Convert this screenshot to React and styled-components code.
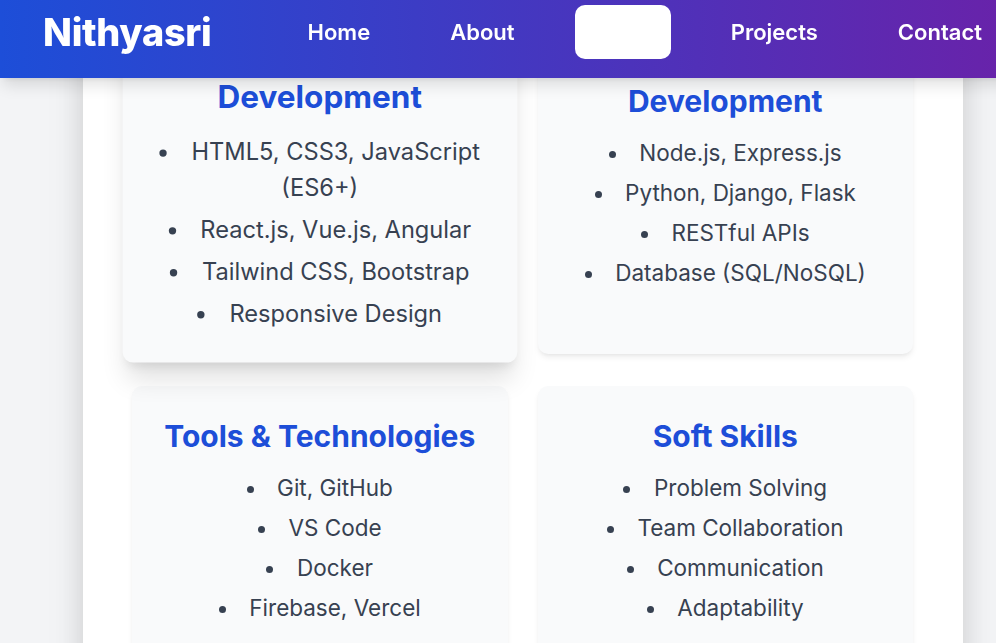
import React from 'react'
import styled, { createGlobalStyle } from 'styled-components'

const skills = [
    {
        title: 'Frontend Development',
        items: ['HTML5, CSS3, JavaScript (ES6+)', 'React.js, Vue.js, Angular', 'Tailwind CSS, Bootstrap', 'Responsive Design'],
        active: true,
    },
    {
        title: 'Backend Development',
        items: ['Node.js, Express.js', 'Python, Django, Flask', 'RESTful APIs', 'Database (SQL/NoSQL)'],
    },
    {
        title: 'Tools & Technologies',
        items: ['Git, GitHub', 'VS Code', 'Docker', 'Firebase, Vercel'],
    },
    {
        title: 'Soft Skills',
        items: ['Problem Solving', 'Team Collaboration', 'Communication', 'Adaptability'],
    },
]

const links = ['Home', 'About', 'Skills', 'Projects', 'Contact']

function App() {
    return (
        <>
            <GlobalStyle />
            <Page>
                <Header>
                    <Logo>Nithyasri</Logo>
                    <Nav>
                        {links.map((l) => (
                            <NavLink key={l} $active={l === 'Skills'}>{l}</NavLink>
                        ))}
                    </Nav>
                </Header>
                <Panel>
                    <Grid>
                        {skills.map((s) => (
                            <Card key={s.title} $active={s.active}>
                                <CardTitle>{s.title}</CardTitle>
                                <List>
                                    {s.items.map((i) => (
                                        <li key={i}>{i}</li>
                                    ))}
                                </List>
                            </Card>
                        ))}
                    </Grid>
                </Panel>
            </Page>
        </>
    )
}

export default App

const GlobalStyle = createGlobalStyle`
html, body{
    margin:0;
    padding:0;
    overflow:hidden;
    background:#f3f4f6;
    font-family:Inter, "Noto Sans", sans-serif;
}
`
const Page = styled.div`
width:1046px;
min-height:643px;
background:#f3f4f6;
`
const Header = styled.header`
position:fixed;
top:0;
left:0;
z-index:10;
width:1046px;
height:78px;
box-sizing:border-box;
padding:5px 44px 19px 43px;
display:flex;
align-items:center;
justify-content:space-between;
background:linear-gradient(to right, #1d4ed8, #6b21a8);
box-shadow:0 10px 15px -3px rgba(0,0,0,0.12), 0 4px 6px -4px rgba(0,0,0,0.1);
`
const Logo = styled.div`
color:white;
font-size:37.8px;
font-weight:800;
letter-spacing:-0.3px;
`
const Nav = styled.nav`
display:flex;
align-items:center;
gap:40px;
`
const NavLink = styled.a`
display:block;
padding:10px 20px;
line-height:34px;
font-size:22px;
font-weight:600;
color:white;
border-radius:10px;
background:${(p) => (p.$active ? 'white' : 'transparent')};
`
const Panel = styled.main`
width:880px;
min-height:643px;
margin:0 auto;
box-sizing:border-box;
padding:11px 50px 40px 49px;
background:white;
box-shadow:0 20px 40px -8px rgba(0,0,0,0.18), 0 0 24px rgba(0,0,0,0.06);
`
const Grid = styled.div`
display:grid;
grid-template-columns:1fr 1fr;
column-gap:30px;
row-gap:32px;
`
const Card = styled.div`
background:#f9fafb;
border-radius:10px;
padding:30px;
text-align:center;
transform:${(p) => (p.$active ? 'scale(1.05)' : 'none')};
box-shadow:${(p) => (p.$active
        ? '0 20px 25px -5px rgba(0,0,0,0.12), 0 8px 10px -6px rgba(0,0,0,0.1)'
        : '0 4px 6px -1px rgba(0,0,0,0.08), 0 2px 4px -2px rgba(0,0,0,0.06)')};
`
const CardTitle = styled.h3`
margin:0 0 15px;
font-size:30px;
line-height:40px;
font-weight:700;
color:#1d4ed8;
`
const List = styled.ul`
margin:0;
padding:0;
list-style:disc inside;
color:#374151;
font-size:22.5px;
line-height:34px;
li + li{
    margin-top:6px;
}
`
